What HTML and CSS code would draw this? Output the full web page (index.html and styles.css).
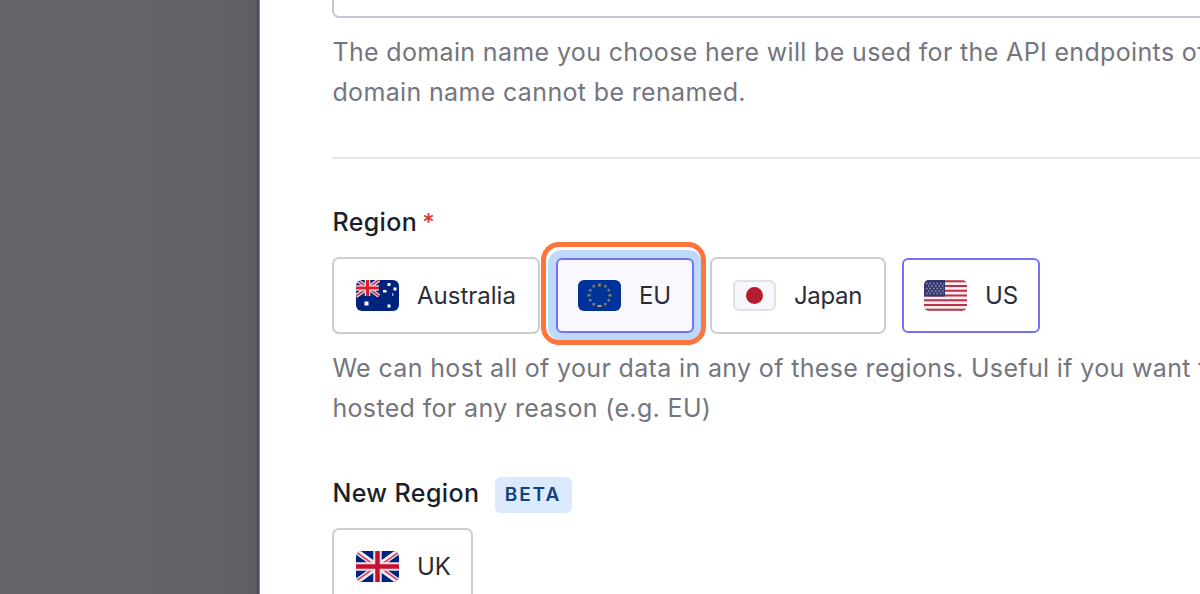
FILE: index.html
```html
<!DOCTYPE html>
<html lang="en">
<head>
<meta charset="utf-8">
<title>Region</title>
<link rel="stylesheet" href="styles.css">
</head>
<body>
<div class="page">
  <div class="backdrop"></div>
  <main class="panel">
    <div class="domain-input"></div>
    <p class="help">The domain name you choose here will be used for the API endpoints of<br>domain name cannot be renamed.</p>
    <hr class="divider">
    <div class="label">Region <span class="required">*</span></div>
    <div class="options">
      <div class="option australia">
        <svg class="flag" viewBox="0 0 43 31">
          <rect width="43" height="31" rx="6" fill="#00247d"/>
          <defs><clipPath id="au"><rect width="43" height="31" rx="6"/></clipPath></defs>
          <g clip-path="url(#au)">
            <path d="M1 0L23 16M0 16L23 0" stroke="#e3e3ef" stroke-width="4"/>
            <path d="M1 0L23 16M0 16L23 0" stroke="#d63a4a" stroke-width="1.800"/>
            <path d="M11.500 0V16M0 8H23" stroke="#e6e0ea" stroke-width="5.500"/>
            <path d="M11.500 0V16M0 8H23" stroke="#d8202f" stroke-width="3"/>
          </g>
          <path d="M8.500 21.500h4v4h-4zM31.500 3h3v3h-3zM37.500 7.500h3v3h-3zM27 10h3.500v2.500h-3.500zM31.500 24.500h3v3h-3z" fill="#fff"/>
          <path d="M36 13h1.500v3h-1.500z" fill="#8fa0cf"/>
        </svg>
        <span>Australia</span>
      </div>
      <div class="option eu">
        <svg class="flag" viewBox="0 0 43 31">
          <rect width="43" height="31" rx="6" fill="#039"/>
          <path d="M20 3.500h3v3h-3zM14.500 5h2.500v2.500h-2.500zM26 5h2.500v2.500h-2.500zM11 9h2.500v2.500h-2.500zM29.500 9h2.500v2.500h-2.500zM9.500 14h3v2.500h-3zM30.500 14h3v2.500h-3zM11 19h2.500v2.500h-2.500zM29.500 19h2.500v2.500h-2.500zM14.500 23h2.500v2.500h-2.500zM26 23h2.500v2.500h-2.500z" fill="#7f8061"/>
          <path d="M19.500 25h4v2h-4z" fill="#b5a646"/>
        </svg>
        <span>EU</span>
        <div class="focus-ring"></div>
      </div>
      <div class="option japan">
        <svg class="flag" viewBox="0 0 43 31">
          <rect x="1" y="1" width="41" height="29" rx="5" fill="#f5f7fa" stroke="#dce2e7" stroke-width="2"/>
          <circle cx="21.500" cy="15.500" r="8.500" fill="#b51c30"/>
        </svg>
        <span>Japan</span>
      </div>
      <div class="option us">
        <svg class="flag" viewBox="0 0 43 31">
          <defs><clipPath id="us"><rect width="43" height="31" rx="5"/></clipPath></defs>
          <g clip-path="url(#us)">
            <rect width="43" height="31" fill="#f1edf1"/>
            <path d="M0 1.200H43M0 6H43M0 10.800H43M0 15.500H43M0 20.300H43M0 25H43M0 29.800H43" stroke="#bd3045" stroke-width="2"/>
            <rect width="21" height="16.500" fill="#34366f"/>
            <path d="M2 3.500H20M4 6H20M2 8.500H20M4 11H20M2 13.500H20" stroke="#9697b7" stroke-width="1.400" stroke-dasharray="1.500 2"/>
          </g>
        </svg>
        <span>US</span>
      </div>
    </div>
    <p class="help hosting">We can host all of your data in any of these regions. Useful if you want to<br>hosted for any reason (e.g. EU)</p>
    <div class="label new-region">New Region <span class="badge">BETA</span></div>
    <div class="options">
      <div class="option uk">
        <svg class="flag" viewBox="0 0 43 31">
          <defs><clipPath id="uk"><rect width="43" height="31" rx="6"/></clipPath></defs>
          <g clip-path="url(#uk)">
            <rect width="43" height="31" fill="#00247d"/>
            <path d="M0 0L43 31M0 31L43 0" stroke="#f0f0f5" stroke-width="5.500"/>
            <path d="M0 1L21 16M22 15L43 30M0 30L21 15M22 16L43 1" stroke="#d9485c" stroke-width="1.800"/>
            <path d="M21.500 0V31M0 15.500H43" stroke="#f0dfe6" stroke-width="8.500"/>
            <path d="M21.500 0V31M0 15.500H43" stroke="#c8102e" stroke-width="4.500"/>
          </g>
        </svg>
        <span>UK</span>
      </div>
    </div>
  </main>
</div>
</body>
</html>
```
FILE: styles.css
```css
* { box-sizing: border-box; }
body {
  margin: 0;
  font-family: Inter, "Liberation Sans", sans-serif;
  font-size: 24px;
  color: #2a2d38;
  background: #fff;
}
.page { display: flex; width: 100vw; height: 594px; overflow: hidden; }
.backdrop {
  flex: 0 0 260px;
  background: linear-gradient(90deg, #646569 0, #626367 210px, #5d5f65 256px, #41455a 258px, #555869 259px, #b8b9bf 260px);
}
.panel { flex: 1; min-width: 0; padding-left: 72.400px; overflow: hidden; }
.domain-input {
  height: 18px;
  width: 1000px;
  border: 2px solid #c8c7da;
  border-top: 0;
  border-radius: 0 0 0 7px;
}
.help {
  margin: 14px 0 0;
  height: 80px;
  font-size: 25px;
  line-height: 40px;
  letter-spacing: .350px;
  white-space: nowrap;
  color: #74757e;
}
.divider { margin: 45px 0 0; border: 0; height: 2px; background: #e5e5e7; }
.label {
  display: flex;
  align-items: center;
  height: 36px;
  margin-top: 45px;
  font-size: 25px;
  font-weight: 450;
  letter-spacing: .400px;
  color: #1c1f2b;
}
.required { margin-left: 5px; color: #d93636; font-size: 24px; }
.options { display: flex; gap: 16px; height: 77px; align-items: center; margin-top: 17px; }
.option {
  position: relative;
  display: flex;
  align-items: center;
  height: 77px;
  padding-left: 21px;
  gap: 18px;
  border: 2px solid #cdcdd2;
  border-radius: 7px;
  letter-spacing: 0;
  line-height: 28px;
  background: #fff;
}
.flag { flex: none; width: 43px; height: 31px; }
.australia { width: 207.500px; padding-left: 21.600px; }
.eu, .us { height: 75px; border-color: #7772f5; padding-left: 20px; border-radius: 6px; }
.eu { width: 138px; background: #f9f8ff; box-shadow: 0 0 0 8px #bfd9fc; }
.us { width: 138px; }
.japan { width: 176px; letter-spacing: -.300px; }
.uk { width: 140.500px; padding-left: 21.600px; }
.focus-ring {
  position: absolute;
  inset: -18px -14px -14px -17px;
  border: 5px solid #ff743b;
  border-radius: 18px;
}
.hosting { margin-top: 14px; }
.new-region { height: 36px; margin-top: 49px; align-items: flex-start; line-height: 32px; }
.new-region + .options { margin-top: 15px; }
.badge {
  margin-left: 16px;
  width: 77px;
  height: 36px;
  padding-right: 2px;
  border-radius: 6px;
  background: #dceafd;
  color: #124381;
  font-size: 19px;
  line-height: 36px;
  text-align: center;
  font-weight: 600;
  letter-spacing: 1.900px;
}
```
